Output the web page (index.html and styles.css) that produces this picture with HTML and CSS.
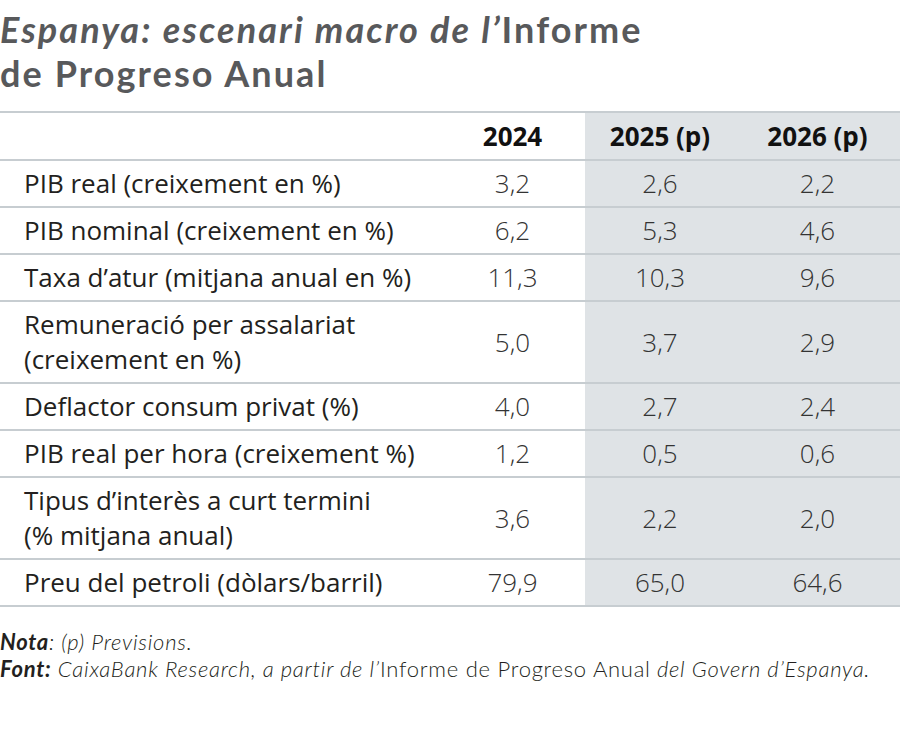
FILE: index.html
```html
<!DOCTYPE html>
<html lang="ca">
<head>
<meta charset="utf-8">
<link rel="stylesheet" href="styles.css">
</head>
<body>
<h1 class="title"><em>Espanya: escenari macro de l’</em>Informe<br>de Progreso Anual</h1>
<table class="macro">
  <thead>
    <tr><th class="label"></th><th class="c1">2024</th><th class="c2 shade">2025 (p)</th><th class="c3 shade">2026 (p)</th></tr>
  </thead>
  <tbody>
    <tr><td class="label">PIB real (creixement en %)</td><td>3,2</td><td class="shade">2,6</td><td class="shade">2,2</td></tr>
    <tr><td class="label">PIB nominal (creixement en %)</td><td>6,2</td><td class="shade">5,3</td><td class="shade">4,6</td></tr>
    <tr><td class="label">Taxa d’atur (mitjana anual en %)</td><td>11,3</td><td class="shade">10,3</td><td class="shade">9,6</td></tr>
    <tr><td class="label">Remuneració per assalariat<br>(creixement en %)</td><td>5,0</td><td class="shade">3,7</td><td class="shade">2,9</td></tr>
    <tr><td class="label">Deflactor consum privat (%)</td><td>4,0</td><td class="shade">2,7</td><td class="shade">2,4</td></tr>
    <tr><td class="label">PIB real per hora (creixement %)</td><td>1,2</td><td class="shade">0,5</td><td class="shade">0,6</td></tr>
    <tr><td class="label">Tipus d’interès a curt termini<br>(% mitjana anual)</td><td>3,6</td><td class="shade">2,2</td><td class="shade">2,0</td></tr>
    <tr><td class="label">Preu del petroli (dòlars/barril)</td><td>79,9</td><td class="shade">65,0</td><td class="shade">64,6</td></tr>
  </tbody>
</table>
<div class="notes">
  <p><b>Nota</b>: (p) Previsions.</p>
  <p><b>Font:</b> CaixaBank Research, a partir de l’<span class="up">Informe de Progreso Anual</span> del Govern d’Espanya.</p>
</div>
</body>
</html>
```
FILE: styles.css
```css
html, body {
  margin: 0;
  padding: 0;
  background: #ffffff;
}
body {
  width: 900px;
  font-family: "Open Sans", "Liberation Sans", sans-serif;
}
.title {
  margin: 0;
  padding-top: 7px;
  font-family: "Lato", "Open Sans", sans-serif;
  font-size: 36px;
  line-height: 44px;
  font-weight: 700;
  color: #58595b;
  letter-spacing: 2.1px;
}
.title em {
  font-style: italic;
}
.macro {
  margin-top: 16px;
  width: 900px;
  border-collapse: collapse;
  font-size: 26px;
  letter-spacing: 0;
  color: #231f20;
}
.macro th, .macro td {
  border-top: 2px solid #c7cdd1;
  border-bottom: 2px solid #c7cdd1;
  padding: 5px 0 5px;
  line-height: 35px;
  text-align: center;
  font-weight: 400;
  vertical-align: middle;
}
.macro th {
  font-weight: 700;
  padding: 6px 0 5px;
  color: #111111;
}
.macro td {
  font-weight: 300;
  color: #333333;
}
.macro .label {
  text-align: left;
  padding-left: 24px;
  width: 416px;
  font-weight: 400;
  color: #231f20;
}
.macro .c1 { width: 145px; }
.macro .c2 { width: 150px; }
.macro .c3 { width: 165px; }
.shade {
  background: #dfe3e6;
}
.notes {
  margin-top: 21px;
  font-family: "Lato", "Open Sans", sans-serif;
  font-size: 22px;
  line-height: 27px;
  font-style: italic;
  font-weight: 300;
  color: #231f20;
  letter-spacing: 0.75px;
}
.notes p {
  margin: 0;
}
.notes b {
  font-weight: 700;
}
.notes .up {
  font-style: normal;
}
```
